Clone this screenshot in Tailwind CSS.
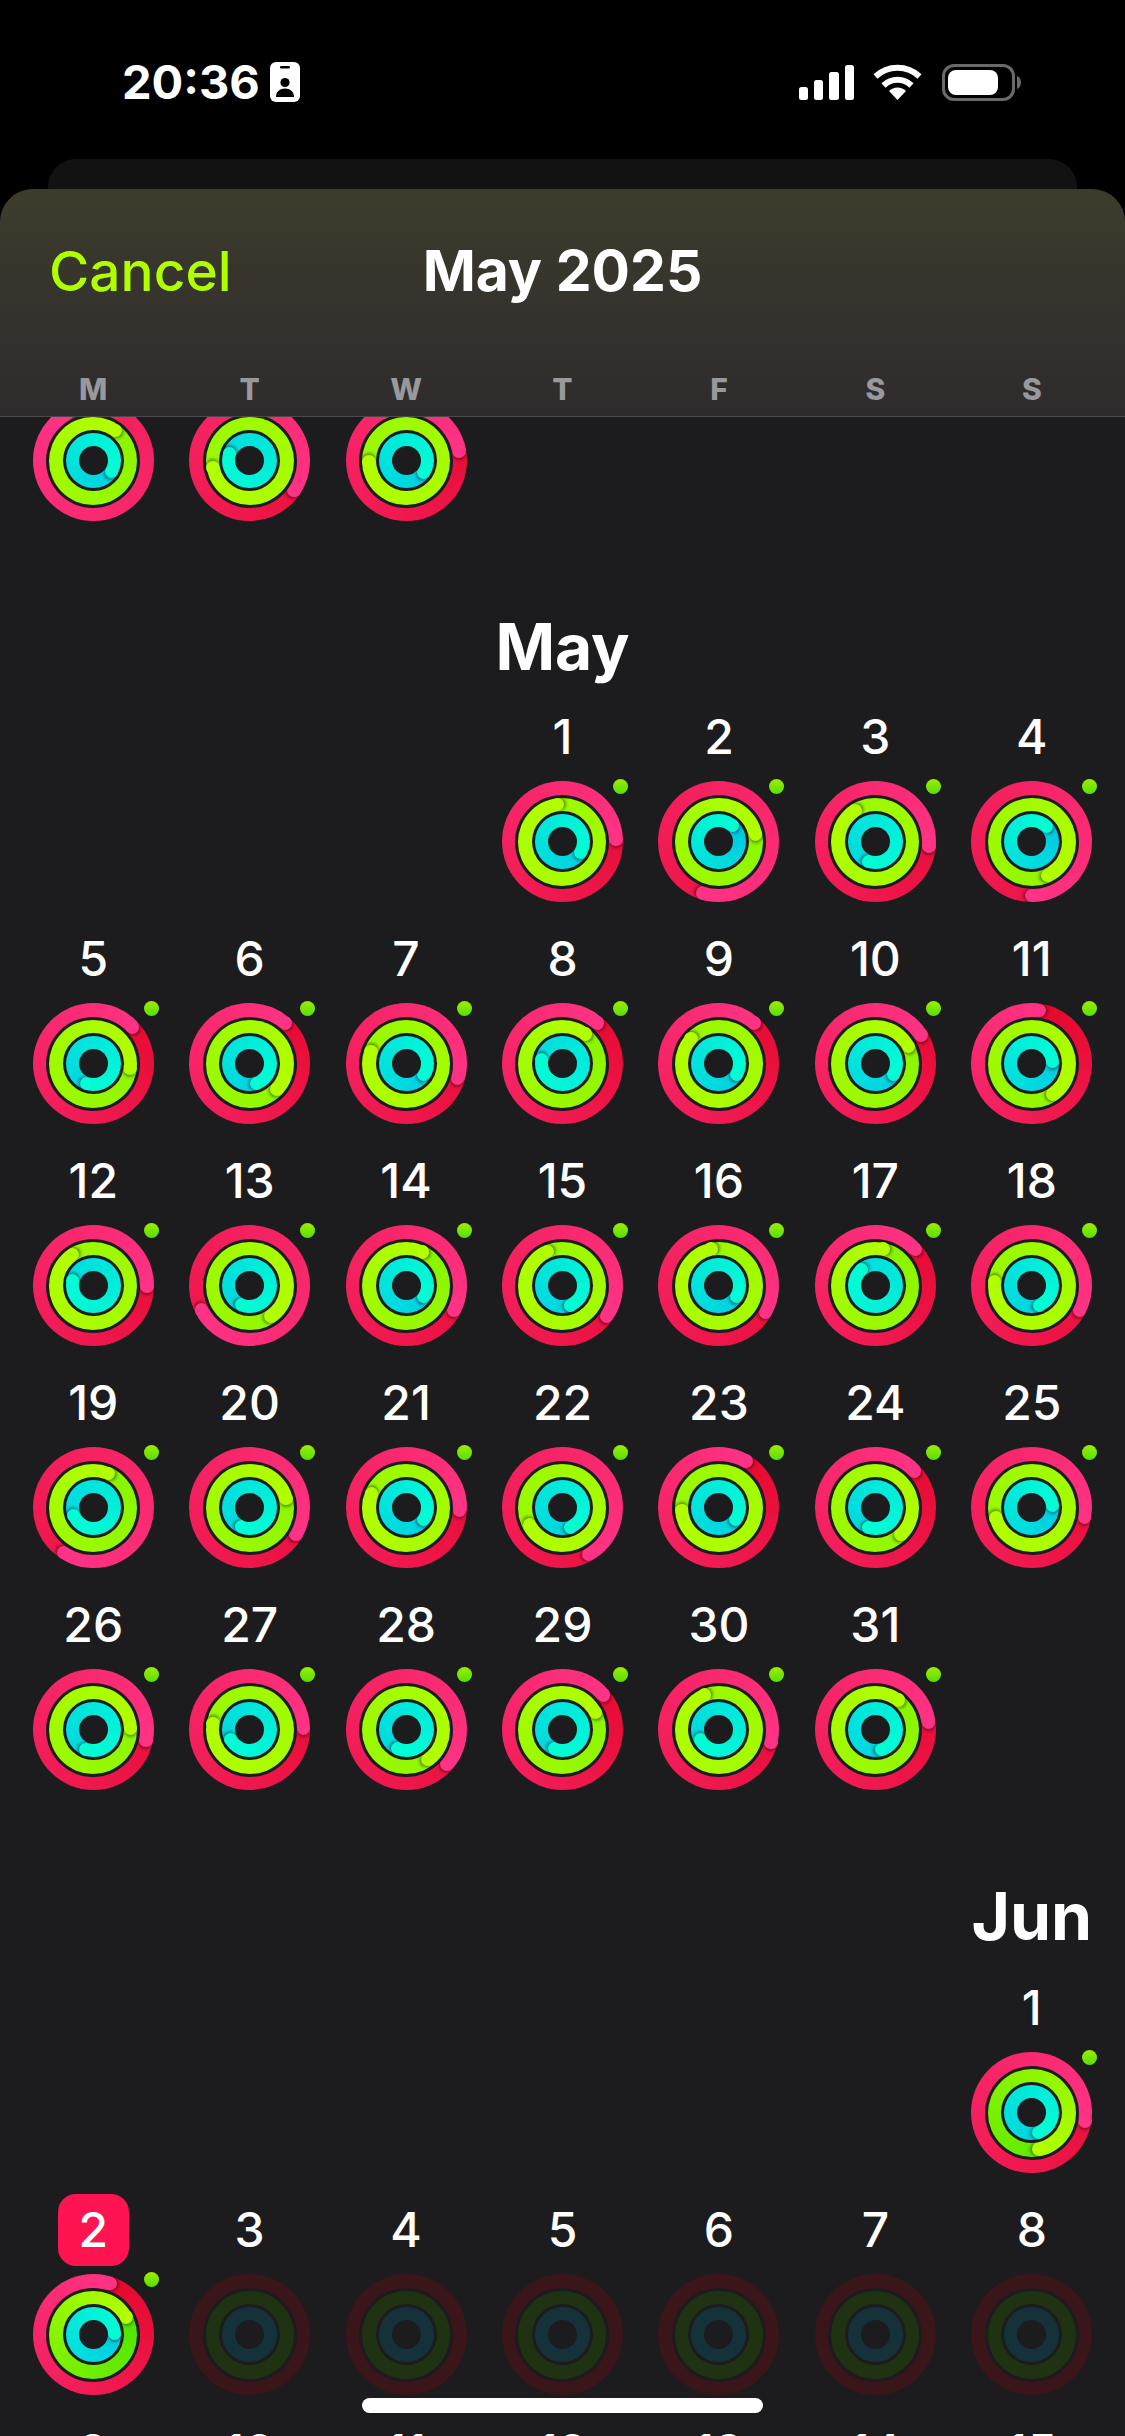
<!DOCTYPE html>
<html lang="en">

<head>
    <meta charset="UTF-8">
    <meta name="viewport" content="width=device-width, initial-scale=1.0">
    <title>Activity calendar</title>
    <script src="https://cdn.jsdelivr.net/npm/@tailwindcss/browser@4"></script>
</head>

<body class="bg-black text-white font-['Inter',sans-serif]">
    <div class="relative w-[1125px] h-[2436px] overflow-hidden flex flex-col">

        <!-- status bar -->
        <div class="h-[159px] shrink-0 relative">
            <div class="flex items-center pl-[122px] pr-[104px] pt-[58px] h-[106px]">
                <span class="text-[47px] leading-[48px] font-bold w-[148px]">20:36</span>
                <svg class="w-[30px] h-[40px]" viewBox="0 0 30 40">
                    <rect width="30" height="40" rx="6" fill="#fff" />
                    <rect x="10" y="4" width="10" height="2.6" rx="1.3" fill="#000" />
                    <circle cx="15" cy="20.5" r="4.6" fill="#000" />
                    <path d="M6 35C6 29.5 10 26.500 15 26.500S24 29.500 24 35Z" fill="#000" />
                </svg>
                <div class="flex-1"></div>
                <svg class="w-[55px] h-[35px]" viewBox="0 0 55 35" fill="#fff">
                    <rect x="0" y="22" width="9" height="13" rx="2.500" />
                    <rect x="15" y="15" width="9" height="20" rx="2.500" />
                    <rect x="30" y="7" width="10" height="28" rx="2.500" />
                    <rect x="46" y="0" width="9" height="35" rx="2.500" />
                </svg>
                <svg class="w-[49px] h-[36px] ml-[19px]" viewBox="0 0 49 36" fill="none" stroke="#fff" stroke-width="6">
                    <path d="M2.500 12.500A32 32 0 0 1 46.500 12.500" />
                    <path d="M10.500 21.500A20 20 0 0 1 38.500 21.500" />
                    <path d="M24.500 36L16 27A12 12 0 0 1 33 27Z" fill="#fff" stroke="none" />
                </svg>
                <svg class="w-[79px] h-[37px] ml-[20px]" viewBox="0 0 79 37">
                    <rect x="1.500" y="1.500" width="70" height="34" rx="10.500" fill="none" stroke="#6a6a6a" stroke-width="3" />
                    <rect x="6" y="6" width="50" height="25" rx="8" fill="#fff" />
                    <path d="M75 12C77.500 13 79 15.500 79 18.500S77.500 24 75 25Z" fill="#6a6a6a" />
                </svg>
            </div>
        </div>

        <!-- card stacked behind the sheet -->
        <div class="h-[30px] shrink-0 mx-[48px] rounded-t-[28px] bg-[#121212]"></div>

        <!-- sheet -->
        <div class="flex-1 min-h-0 flex flex-col rounded-t-[33px] overflow-hidden bg-[#1c1c1e]">
            <div class="h-[228px] shrink-0 z-10 bg-linear-to-b from-[#3d3c2c] to-[#2e2b2c] border-b border-[#4a4a4c]">
                <div class="grid grid-cols-3 items-center pt-[52px] px-[49px] h-[112px]">
                    <span class="text-[55px] leading-[60px] font-medium text-[#b0ff00]">Cancel</span>
                    <span class="text-[57px] leading-[60px] font-bold text-center whitespace-nowrap">May 2025</span>
                </div>
                <div class="grid grid-cols-7 px-[15px] pt-[73px] text-[30px] leading-[30px] font-extrabold text-center text-[#98989d]">
                    <span>M</span><span>T</span><span>W</span><span>T</span><span>F</span><span>S</span><span>S</span>
                </div>
            </div>
            <div id="cal" class="flex-1 min-h-0 overflow-hidden"></div>
        </div>

        <!-- home indicator -->
        <div class="absolute left-[362px] top-[2398px] w-[401px] h-[15px] rounded-full bg-white z-20"></div>
    </div>

    <script>
        // [red, green, blue] end angle of each ring, clockwise from 12 o'clock
        const april = [[330, 36, 122], [124, 259, 289], [80, 268, 125]]
        const may = [
            [88, 352, 123], [197, 78, 40], [95, 327, 200], [180, 155, 43],
            [47, 97, 199], [41, 133, 162], [106, 289, 122], [41, 38, 280], [41, 312, 122], [58, 63, 122], [8, 145, 84],
            [91, 326, 285], [243, 145, 203], [117, 26, 122], [125, 336, 159], [120, 348, 123], [48, 12, 319], [117, 276, 159],
            [213, 24, 247], [120, 76, 203], [93, 291, 124], [151, 243, 159], [30, 265, 126], [47, 136, 199], [100, 254, 84],
            [102, 88, 201], [89, 279, 243], [130, 144, 203], [50, 63, 203], [104, 337, 243], [82, 38, 164]
        ]
        const june = [[99, 169, 160], [18, 62, 86]]

        // colour of the ring just after its end: the further the lap, the brighter
        const lapStart = function (low, high, angle) {
            const f = angle / (360 + angle)
            const mixed = low.map((v, i) => Math.round(v + (high[i] - v) * f))
            return `rgb(${mixed.join(',')})`
        }

        const cap = function (size, radius, width, angle, color) {
            const a = angle * Math.PI / 180
            const left = size / 2 + radius * Math.sin(a) - width / 2
            const top = size / 2 - radius * Math.cos(a) - width / 2
            const shadow = `${Math.cos(a) * 2}px ${Math.sin(a) * 2}px 3px rgba(0,0,0,.4)`
            return `<div class="absolute rounded-full" style="left:${left}px;top:${top}px;width:${width}px;height:${width}px;background:${color};box-shadow:${shadow}"></div>`
        }

        const ring = function (angles, lowGreen) {
            if (!angles) {
                return `<div class="w-[121px] h-[121px] rounded-full bg-[#3a1519] flex items-center justify-center">
                    <div class="w-[94px] h-[94px] rounded-full bg-[#1c1c1e] flex items-center justify-center">
                    <div class="w-[88px] h-[88px] rounded-full bg-[#1f3313] flex items-center justify-center">
                    <div class="w-[61px] h-[61px] rounded-full bg-[#1c1c1e] flex items-center justify-center">
                    <div class="w-[55px] h-[55px] rounded-full bg-[#15323b] flex items-center justify-center">
                    <div class="w-[29px] h-[29px] rounded-full bg-[#1c1c1e]"></div></div></div></div></div></div>`
            }
            const [r, g, b] = angles
            const redStart = lapStart([228, 6, 40], [255, 51, 133], r)
            const greenStart = lapStart(lowGreen ? [60, 224, 0] : [132, 244, 0], [178, 255, 0], g)
            const blueStart = lapStart([0, 192, 230], [0, 255, 213], b)
            return `<div class="relative w-[121px] h-[121px]">
                <div class="relative w-[121px] h-[121px] rounded-full flex items-center justify-center" style="background:conic-gradient(from ${r}deg,${redStart},#ff3385)">
                    ${cap(121, 53.75, 13.5, r, '#ff3385')}
                    <div class="relative w-[94px] h-[94px] rounded-full bg-[#1c1c1e] flex items-center justify-center">
                        <div class="relative w-[88px] h-[88px] rounded-full flex items-center justify-center" style="background:conic-gradient(from ${g}deg,${greenStart},#b2ff00)">
                            ${cap(88, 37.25, 13.5, g, '#b2ff00')}
                            <div class="relative w-[61px] h-[61px] rounded-full bg-[#1c1c1e] flex items-center justify-center">
                                <div class="relative w-[55px] h-[55px] rounded-full flex items-center justify-center" style="background:conic-gradient(from ${b}deg,${blueStart},#00ffd5)">
                                    ${cap(55, 21, 13, b, '#00ffd5')}
                                    <div class="relative w-[29px] h-[29px] rounded-full bg-[#1c1c1e]"></div>
                                </div>
                            </div>
                        </div>
                    </div>
                </div>
                <div class="absolute left-[111px] top-[-2px] w-[15px] h-[15px] rounded-full bg-linear-to-b from-[#9bed00] to-[#52e000]"></div>
            </div>`
        }

        const cell = function (day, angles, opts = {}) {
            const number = opts.today
                ? `<span class="w-[71px] h-[72px] rounded-[18px] bg-[#ff1452] flex items-center justify-center">${day}</span>`
                : `<span>${day}</span>`
            return `<div class="h-[222px] flex flex-col items-center pb-[27px]">
                <div class="h-[60px] mb-[14px] flex items-center justify-center text-[48px] leading-[60px] font-medium">${number}</div>
                ${ring(angles, opts.lowGreen)}
            </div>`
        }

        const heading = function (name, start, height, size) {
            return `<div class="grid grid-cols-7 px-[15px] ${height}">
                <div class="${start} pt-[69px] ${size} leading-[60px] font-bold text-center">${name}</div>
            </div>`
        }

        // last April week sits under the header, only its rings show
        let html = `<div class="grid grid-cols-7 px-[15px] mt-[-91px]">`
        april.forEach((a) => { html += cell('', a) })
        html += `</div>`

        html += heading('May', 'col-start-4', 'h-[159px]', 'text-[64px]')
        html += `<div class="grid grid-cols-7 px-[15px]"><div class="col-span-3"></div>`
        may.forEach((a, i) => { html += cell(i + 1, a) })
        html += `</div>`

        html += heading('Jun', 'col-start-7', 'h-[161px]', 'text-[66px]')
        html += `<div class="grid grid-cols-7 px-[15px]"><div class="col-span-6"></div>`
        html += cell(1, june[0], { lowGreen: true })
        html += cell(2, june[1], { lowGreen: true, today: true })
        for (let d = 3; d <= 15; d++) {
            html += cell(d, null)
        }
        html += `</div>`

        document.querySelector('#cal').innerHTML = html
    </script>
</body>

</html>
